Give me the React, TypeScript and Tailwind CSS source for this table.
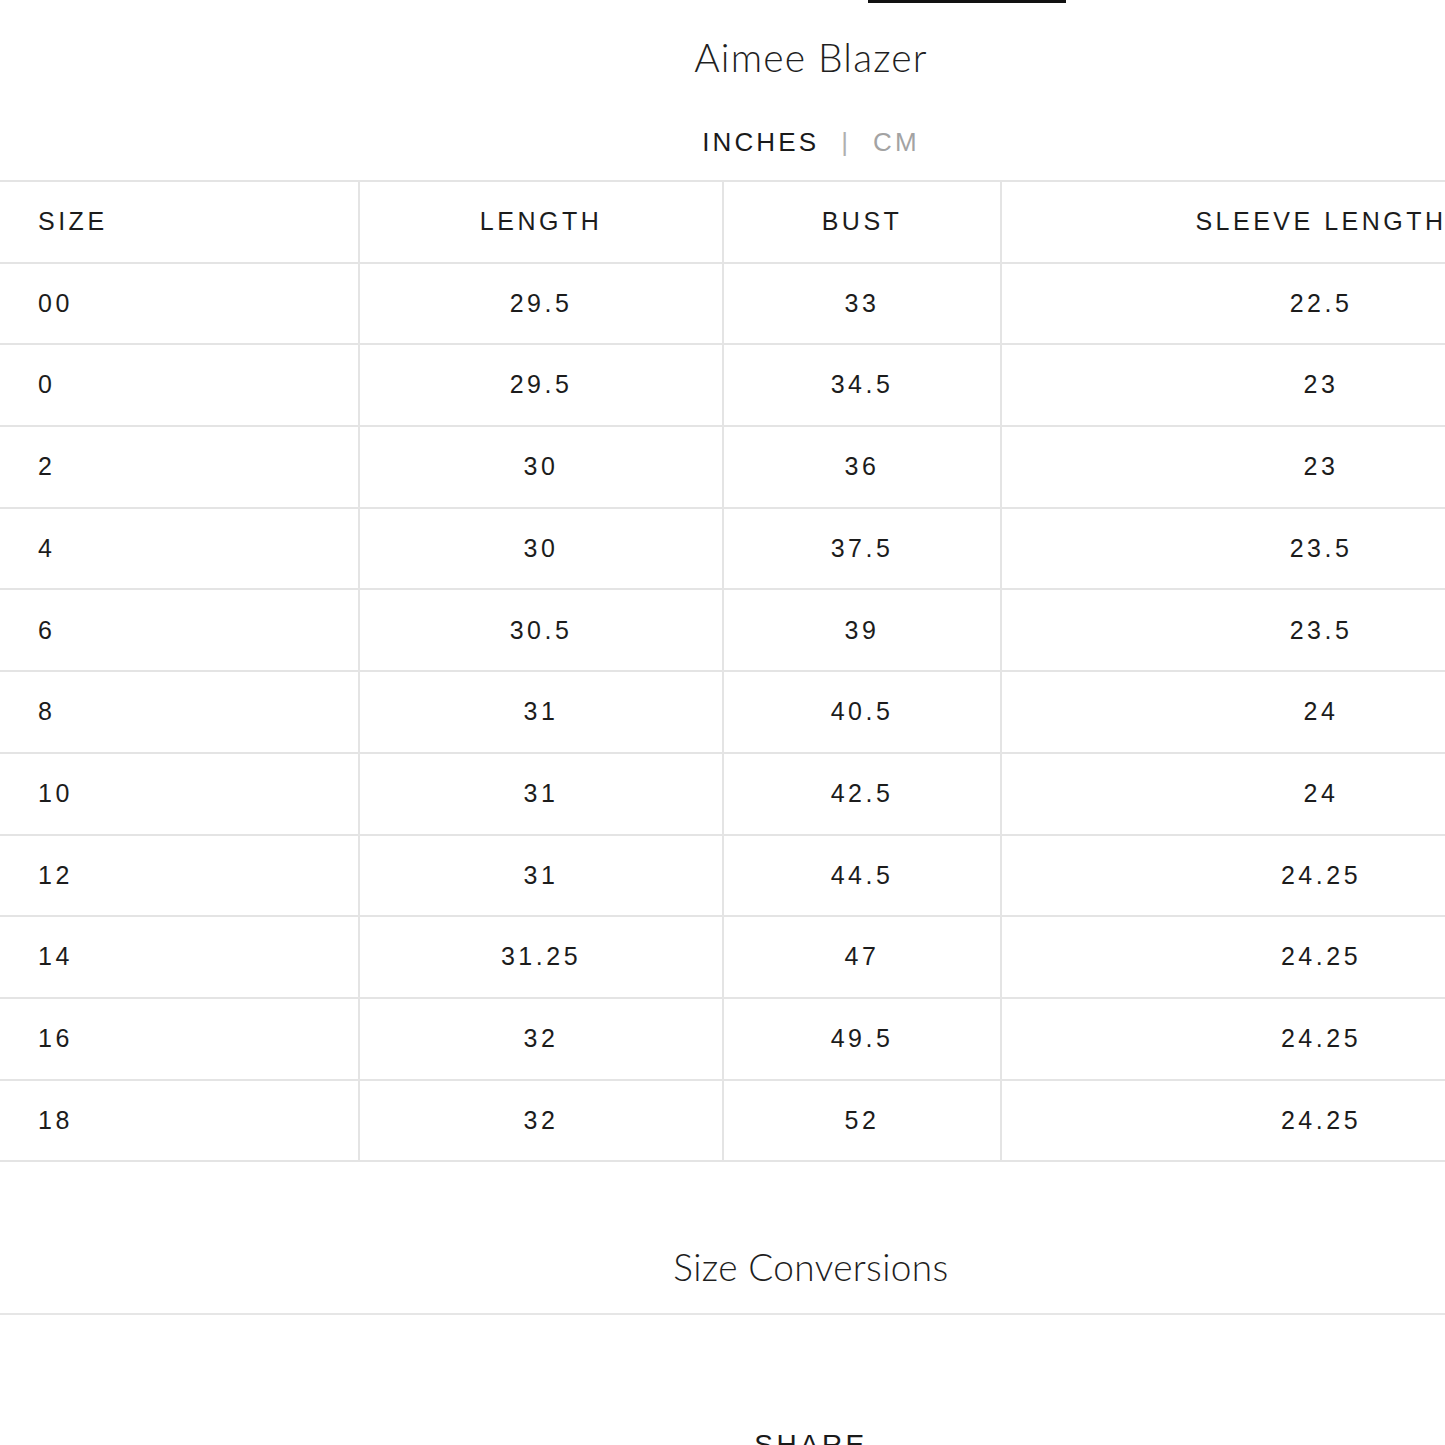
const rows = [
  ["00", "29.5", "33", "22.5"],
  ["0", "29.5", "34.5", "23"],
  ["2", "30", "36", "23"],
  ["4", "30", "37.5", "23.5"],
  ["6", "30.5", "39", "23.5"],
  ["8", "31", "40.5", "24"],
  ["10", "31", "42.5", "24"],
  ["12", "31", "44.5", "24.25"],
  ["14", "31.25", "47", "24.25"],
  ["16", "32", "49.5", "24.25"],
  ["18", "32", "52", "24.25"],
]

const cols = "grid grid-cols-[358px_364px_278px_640px]"
const cell = "h-[81.7px] flex items-center border-b-2 border-[#e4e4e4]"
const wide = "font-['Liberation_Sans',Arial,sans-serif] text-[25px] tracking-[0.14em] text-[#1c1c1c]"

function Row({ values }: { values: string[] }) {
  return (
    <div className={cols}>
      {values.map((v, i) => (
        <div
          key={i}
          className={`${cell} ${i > 0 ? "border-l-2 justify-center" : "pl-[38px]"} ${wide}`}
        >
          {v}
        </div>
      ))}
    </div>
  )
}

export default function App() {
  return (
    <div className="w-[1445px] h-[1445px] overflow-hidden bg-white">
      <div className="w-[1622px]">
        <div className="ml-[868px] w-[198px] h-[3px] bg-[#111]" />

        <h1 className="mt-[35px] text-center font-['Lato',sans-serif] font-light text-[39px] leading-none tracking-[0.03em] text-[#1f1f1f]">
          Aimee Blazer
        </h1>

        <div className="mt-[52px] flex justify-center items-center gap-[22px] font-['Liberation_Sans',Arial,sans-serif] text-[26px] leading-none tracking-[0.12em]">
          <span className="text-[#1a1a1a]">INCHES</span>
          <span className="text-[#b0b0b0] font-light">|</span>
          <span className="text-[#a3a3a3]">CM</span>
        </div>

        {/* tabla de medidas */}
        <div className="mt-[25px] w-[1640px] border-t-2 border-[#e4e4e4]">
          <Row values={["SIZE", "LENGTH", "BUST", "SLEEVE LENGTH"]} />
          {rows.map((r) => (
            <Row key={r[0]} values={r} />
          ))}
        </div>

        <h2 className="mt-[86px] text-center font-['Lato',sans-serif] font-light text-[37px] leading-none tracking-[0.01em] text-[#1f1f1f]">
          Size Conversions
        </h2>

        <div className="mt-[28px] h-[2px] w-[1445px] bg-[#e6e6e6]" />

        <div className="mt-[116px] text-center font-['Liberation_Sans',Arial,sans-serif] text-[28px] leading-none tracking-[0.12em] text-[#1a1a1a]">
          SHARE
        </div>
      </div>
    </div>
  )
}
